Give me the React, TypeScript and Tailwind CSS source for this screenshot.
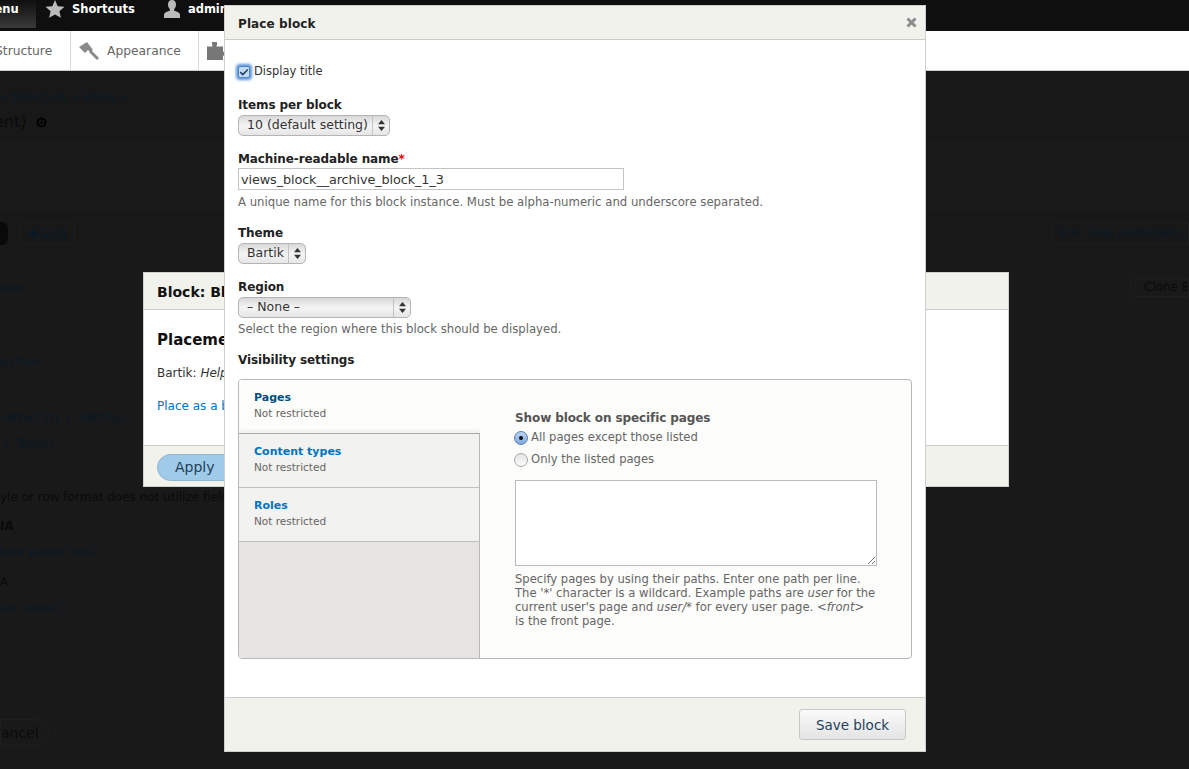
import { Check } from "lucide-react";

const font = "font-['DejaVu_Sans',sans-serif]";

function SelectBox({ label, width }: { label: string; width: string }) {
  return (
    <div className={`flex h-[21px] items-stretch rounded-[5px] border border-[#b4b4b4] bg-gradient-to-b from-[#d8d8d8] via-[#f4f4f4] to-[#e6e6e6] text-[12.5px] text-[#333] ${width}`}>
      <span className="flex-1 truncate pl-[8px] leading-[18px]">{label}</span>
      <span className="flex w-[17px] items-center justify-center border-l border-[#c4c4c4]">
        <svg width="7" height="11" viewBox="0 0 7 11" fill="#333">
          <path d="M3.5 0 7 4.3H0zM3.5 11 0 6.7h7z" />
        </svg>
      </span>
    </div>
  );
}

function FieldLabel({ children }: { children: React.ReactNode }) {
  return <div className="text-[12px] font-bold leading-[16px] tracking-[-0.1px] text-[#222]">{children}</div>;
}

function Help({ children, small }: { children: React.ReactNode; small?: boolean }) {
  return <div className={`whitespace-nowrap leading-[14px] text-[#666] ${small ? "text-[11.6px]" : "text-[11.7px]"}`}>{children}</div>;
}

function VerticalTab({ title, active }: { title: string; active?: boolean }) {
  if (active) {
    return (
      <div className="h-[53px] bg-[#fcfcfa] pl-[15px] pt-[10px]">
        <div className="text-[11px] font-bold leading-[15px] text-[#004f80]">{title}</div>
        <div className="text-[10.5px] leading-[17px] text-[#666]">Not restricted</div>
      </div>
    );
  }
  return (
    <div className="h-[54px] border-b border-r border-b-[#c0c0c0] border-r-[#b8b8b8] bg-[#f2f2f0] pl-[15px] pt-[10px]">
      <div className="text-[11px] font-bold leading-[15px] text-[#0074bd]">{title}</div>
      <div className="text-[10.5px] leading-[17px] text-[#666]">Not restricted</div>
    </div>
  );
}

function PlaceBlockDialog() {
  return (
    <div className="absolute left-[224px] top-[5px] flex h-[747px] w-[702px] flex-col border border-[#cfcfcf] bg-white">
      <div className="flex h-[34px] items-center justify-between border-b border-[#ccc] bg-[#f2f2ed] pl-[13px] pr-[8px]">
        <span className="pt-[2px] text-[12px] font-bold tracking-[0.1px] text-[#222]">Place block</span>
        <svg width="11" height="11" viewBox="0 0 11 11" stroke="#8c8c8c" strokeWidth="3">
          <path d="M1.5 1.500l8 8M9.500 1.500l-8 8" />
        </svg>
      </div>

      <div className="flex-1 pl-[13px] pt-[26px]">
        <div className="flex h-[12px] items-center gap-[4px]">
          <span className="flex h-[12px] w-[12px] items-center justify-center rounded-[2px] border border-[#4f86c6] bg-[#c4daf5] shadow-[0_0_3px_2px_#5b94d8]">
            <Check size={11} strokeWidth={4} className="text-[#23456f]" />
          </span>
          <span className="text-[11.5px] text-[#333]">Display title</span>
        </div>

        <div className="mt-[19px]"><FieldLabel>Items per block</FieldLabel></div>
        <div className="mt-[2px]"><SelectBox label="10 (default setting)" width="w-[152px]" /></div>

        <div className="mt-[15px]">
          <FieldLabel>
            Machine-readable name<span className="text-[#e00]">*</span>
          </FieldLabel>
        </div>
        <div className="mt-[1px] flex h-[22px] w-[386px] items-center border border-[#c4c4c4] px-[2px] pt-[1px] text-[12.8px] tracking-[-0.1px] text-[#333]">
          views_block__archive_block_1_3
        </div>
        <div className="mt-[5px]"><Help>A unique name for this block instance. Must be alpha-numeric and underscore separated.</Help></div>

        <div className="mt-[16px]"><FieldLabel>Theme</FieldLabel></div>
        <div className="mt-[2px]"><SelectBox label="Bartik" width="w-[68px]" /></div>

        <div className="mt-[15px]"><FieldLabel>Region</FieldLabel></div>
        <div className="mt-[2px]"><SelectBox label="– None –" width="w-[173px]" /></div>
        <div className="mt-[4px]"><Help>Select the region where this block should be displayed.</Help></div>

        <div className="mt-[16px]"><FieldLabel>Visibility settings</FieldLabel></div>

        <div className="mt-[11px] flex h-[280px] w-[674px] overflow-hidden rounded-[4px] border border-[#b8b8b8] bg-[#fcfcfa]">
          <div className="flex w-[241px] shrink-0 flex-col">
            <VerticalTab title="Pages" active />
            <div className="rounded-tr-[2px] border-r border-t border-[#a8a8a8] shadow-[0_-2px_3px_rgba(0,0,0,0.15)]" />
            <VerticalTab title="Content types" />
            <VerticalTab title="Roles" />
            <div className="flex-1 border-r border-[#b8b8b8] bg-[#e5e4e0]" />
          </div>
          <div className="pl-[34px] pt-[31px]">
            <div className="pl-[1px] text-[12px] font-bold leading-[15px] tracking-[-0.1px] text-[#555]">Show block on specific pages</div>
            <div className="mt-[5px] flex h-[14px] items-center gap-[3px]">
              <span className="flex h-[14px] w-[14px] items-center justify-center rounded-full border border-[#5c7fae] bg-gradient-to-b from-[#bcd4f3] to-[#7fa9e0]">
                <span className="h-[4px] w-[4px] rounded-full bg-[#111]" />
              </span>
              <span className="text-[11.6px] text-[#666]">All pages except those listed</span>
            </div>
            <div className="mt-[8px] flex h-[14px] items-center gap-[3px]">
              <span className="h-[14px] w-[14px] rounded-full border border-[#a8a8a8] bg-gradient-to-b from-[#e4e4e4] to-[#fafafa]" />
              <span className="text-[11.6px] text-[#666]">Only the listed pages</span>
            </div>
            <div className="relative ml-[1px] mt-[13px] h-[86px] w-[362px] border border-[#bbb] bg-white">
              <svg className="absolute bottom-[1px] right-[1px]" width="8" height="8" viewBox="0 0 8 8" stroke="#777" strokeWidth="1">
                <path d="M1 8 8 1M5 8l3-3" />
              </svg>
            </div>
            <div className="ml-[1px] mt-[6px] w-[362px]">
              <Help small>Specify pages by using their paths. Enter one path per line.</Help>
              <Help small>The '*' character is a wildcard. Example paths are <em>user</em> for the</Help>
              <Help small>current user's page and <em>user/*</em> for every user page. <em>&lt;front&gt;</em></Help>
              <Help small>is the front page.</Help>
            </div>
          </div>
        </div>
      </div>

      <div className="flex h-[54px] items-center justify-end border-t border-[#ccc] bg-[#f2f2ed] pr-[19px]">
        <div className="flex h-[31px] w-[107px] items-center justify-center rounded-[3px] border border-[#c8c8c8] bg-gradient-to-b from-[#fafafa] to-[#e4e4e4] pt-[1px] text-[13.5px] text-[#1f3f5a]">
          Save block
        </div>
      </div>
    </div>
  );
}

function BlockDialog() {
  return (
    <div className="absolute left-[143px] top-[272px] flex h-[215px] w-[866px] flex-col border border-[#d0d0d0] bg-white">
      <div className="flex h-[37px] items-center border-b border-[#ccc] bg-[#f2f2ed] pl-[13px] pt-[2px]">
        <span className="w-[67px] overflow-hidden whitespace-nowrap text-[14px] font-bold text-[#111]">Block: Block</span>
      </div>
      <div className="flex-1 pl-[13px] pt-[20px]">
        <div className="h-[20px] w-[67px] overflow-hidden whitespace-nowrap text-[15px] font-bold leading-[20px] text-[#111]">Placement</div>
        <div className="mt-[14px] w-[67px] overflow-hidden whitespace-nowrap text-[12px] text-[#333]">Bartik: <em>Help</em></div>
        <div className="mt-[15px] w-[67px] overflow-hidden whitespace-nowrap text-[12px] text-[#0074bd]">Place as a block</div>
      </div>
      <div className="flex h-[41px] items-start border-t border-[#ccc] bg-[#f2f2ed] pl-[13px] pt-[8px]">
        <div className="flex h-[27px] w-[80px] items-center rounded-[14px] border border-[#8fb6d2] bg-[#9fcbe8] pl-[17px] text-[14px] text-[#1f3f5a]">Apply</div>
      </div>
    </div>
  );
}

export default function App() {
  return (
    <div className={`relative h-[769px] w-[1189px] overflow-hidden bg-[#191919] ${font}`}>
      {/* toolbar */}
      <div className="flex h-[31px] items-start bg-[#0f0f0f] text-[11.5px] font-bold text-white">
        <div className="flex h-[28px] w-[36px] items-start overflow-hidden bg-gradient-to-b from-[#0f0f0f] to-[#3a3a3a] pt-[1px]">
          <span className="-ml-[17px]">Menu</span>
        </div>
        <svg className="ml-[9px]" width="20" height="18" viewBox="0 0 20 18" fill="#bbb">
          <path d="M10 0l2.700 6.200 6.800.6-5.100 4.400 1.500 6.600L10 14.400 4.100 17.800l1.500-6.600L.5 6.800l6.800-.6z" />
        </svg>
        <span className="ml-[7px] pt-[1px]">Shortcuts</span>
        <svg className="ml-[27px]" width="20" height="18" viewBox="0 0 20 18" fill="#bbb">
          <path d="M10 0c2.600 0 4 2 4 4.600 0 2-.9 3.700-1.900 4.700v1.400c2.800.8 5.900 1.600 5.900 4.300V18H2v-3c0-2.700 3.100-3.500 5.900-4.300V9.300C6.900 8.300 6 6.600 6 4.600 6 2 7.400 0 10 0z" />
        </svg>
        <span className="ml-[6px] pt-[1px]">admin</span>
      </div>

      {/* admin menu tray */}
      <div className="flex h-[40px] items-stretch border-b border-[#ccc] bg-white text-[12.3px] text-[#666]">
        <div className="flex w-[71px] items-center overflow-hidden border-r border-[#d8d8d8] pt-[1px]">
          <span className="-ml-[5px]">Structure</span>
        </div>
        <div className="flex w-[128px] items-center border-r border-[#d8d8d8] pl-[8px]">
          <svg width="20" height="20" viewBox="0 0 20 20" fill="#8a8a8a">
            <path d="M0 6l8-5 6 8-3 2-2-2-3 3z" />
            <path d="M11 10l8 8" stroke="#8a8a8a" strokeWidth="3" />
          </svg>
          <span className="ml-[8px] pt-[1px]">Appearance</span>
        </div>
        <svg className="ml-[8px] self-center" width="18" height="18" viewBox="0 0 18 18" fill="#777">
          <path d="M5 0h5v2.500c0 .8-.6 1-.6 2H16v5.200h2v4h-2V18H0V4.500h5.600C5.600 3.500 5 3.300 5 2.500z" />
        </svg>
      </div>

      {/* dimmed page behind the dialogs */}
      <div className="text-[12px] leading-[14px] text-[#0a0a0a]">
        <div className="h-[71px] bg-[#181818] pt-[19px]">
          <div className="text-[#0a1824]">» Structure » Views »</div>
          <div className="mt-[6px] flex items-center gap-[9px] text-[16px] leading-[24px]">
            <span className="-ml-[6px]">ent)</span>
            <svg width="11" height="11" viewBox="0 0 11 11" fill="none" stroke="#000" strokeWidth="2">
              <circle cx="5.500" cy="5.500" r="4" />
              <path d="M3.500 5.500h4M5.500 3.500v4" strokeWidth="1" />
            </svg>
          </div>
        </div>
        <div className="h-[71px] bg-[#1a1a1a]" />
        <div className="flex h-[47px] items-start justify-between border-y border-[#161616] bg-[#181818] pt-[8px]">
          <div className="flex items-center gap-[12px]">
            <div className="h-[23px] w-[8px] rounded-r-[6px] bg-[#090909]" />
            <div className="flex h-[23px] w-[55px] items-center justify-center rounded-[4px] border border-[#1e1e1e] text-[14px] text-[#0a1824]">✚Add</div>
          </div>
          <div className="h-[23px] w-[137px] overflow-hidden whitespace-nowrap rounded-l-[4px] border border-[#1e1e1e] pl-[6px] leading-[20px] text-[#0a1824]">Edit view name/description</div>
        </div>
        <div className="flex items-start justify-between pt-[18px]">
          <span className="-ml-[7px] mt-[4px] text-[#0a1824]">Block</span>
          <div className="h-[19px] w-[59px] overflow-hidden whitespace-nowrap rounded-l-[4px] border border-[#1e1e1e] pl-[13px] leading-[16px]">Clone Block</div>
        </div>
        <div className="-ml-[3px] mt-[58px] text-[#0a1824]">archive</div>
        <div className="-ml-[22px] mt-[42px] whitespace-nowrap text-[#0a1824]">formatted list &nbsp;|&nbsp; Settings</div>
        <div className="mt-[12px] whitespace-nowrap text-[#0a1824]">&nbsp;|&nbsp; Teaser</div>
        <div className="mt-[39px] whitespace-nowrap">yle or row format does not utilize fields.</div>
        <div className="mt-[15px] font-bold">IA</div>
        <div className="mt-[12px] text-[#0a1824]">hed status (Yes)</div>
        <div className="mt-[16px]">A</div>
        <div className="mt-[12px] text-[#0a1824]">ate (desc)</div>
        <div className="mt-[91px] flex h-[52px] items-center border-t border-[#161616]">
          <div className="flex h-[27px] w-[49px] items-center rounded-r-[14px] border border-[#1e1e1e] text-[14px]">ancel</div>
        </div>
      </div>

      <BlockDialog />
      <PlaceBlockDialog />
    </div>
  );
}
